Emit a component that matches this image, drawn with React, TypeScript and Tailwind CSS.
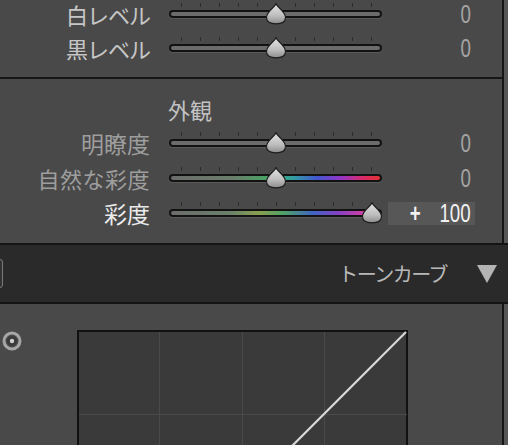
import React from 'react';

// 現像パネル（基本補正の下部 + トーンカーブの上部）
const TICKS = [12, 31, 50, 69, 88, 107, 126, 145, 164, 183, 202];

const GRAY = 'linear-gradient(to right, #6c6c6c, #6c6c6c)';
const VIBRANCE =
  'linear-gradient(to right, #6c6c6c 0%, #6a7e6a 30%, #44a864 48%, #32a0a0 58%, #4256d0 70%, #9a34c4 82%, #dc2a66 92%, #e23232 100%)';
const SATURATION =
  'linear-gradient(to right, #6c6c6c 0%, #6a806a 28%, #8aa050 42%, #4ea266 54%, #4064c4 68%, #8440c4 80%, #d040a4 92%, #e24a84 100%)';

type SliderProps = {
  label: string;
  value: React.ReactNode;
  pos: number;
  track?: string;
  labelClass: string;
  rowClass?: string;
  active?: boolean;
};

function Thumb() {
  return (
    <svg width="22" height="22" viewBox="0 0 22 22">
      <defs>
        <linearGradient id="thumbFill" x1="0" y1="0" x2="0" y2="1">
          <stop offset="0%" stopColor="#e4e4e4" />
          <stop offset="60%" stopColor="#bdbdbd" />
          <stop offset="100%" stopColor="#8c8c8c" />
        </linearGradient>
      </defs>
      <path
        d="M11 0.8 C12.5 4.5 20.5 8.5 20.5 14.5 C20.5 19 17 20.8 11 20.8 C5 20.8 1.5 19 1.5 14.5 C1.5 8.5 9.5 4.5 11 0.8 Z"
        fill="url(#thumbFill)"
        stroke="#1e1e1e"
        strokeWidth="1.2"
      />
    </svg>
  );
}

function Slider({ label, value, pos, track = GRAY, labelClass, rowClass = 'h-[34px]', active }: SliderProps) {
  return (
    <div className={`flex items-center ${rowClass}`}>
      <div className={`w-[150px] text-right leading-none whitespace-nowrap ${labelClass}`}>{label}</div>
      <div className="relative ml-[19px] w-[213px] h-[34px] flex items-center">
        {TICKS.map((t) => (
          <span key={t} className="absolute top-[6px] w-px h-[4px] bg-[#2c2c2c]" style={{ left: t }} />
        ))}
        <div className="w-full h-[8px] rounded-full bg-[#121212] p-[2px] shadow-[0_1px_0_#5a5a5a]">
          <div className="h-full rounded-full" style={{ background: track }} />
        </div>
        <div className="absolute top-[6px]" style={{ left: pos - 11 }}>
          <Thumb />
        </div>
      </div>
      <div
        className={`ml-[6px] w-[87px] h-[23px] flex items-center justify-end pr-[4px] ${
          active ? 'bg-[#575757] text-[#f2f2f2]' : 'text-[#a4a4a4]'
        }`}
      >
        {value}
      </div>
    </div>
  );
}

function Num({ children, className = '' }: { children: React.ReactNode; className?: string }) {
  return (
    <span
      className={`font-['Liberation_Sans',Arial,sans-serif] text-[25px] leading-none scale-x-75 origin-right whitespace-pre ${className}`}
    >
      {children}
    </span>
  );
}

function PanelRow({ children }: { children: React.ReactNode }) {
  return (
    <div className="flex shrink-0">
      <div className="w-[502px] bg-[#494949]">{children}</div>
      <div className="w-[2px] bg-[#161616]" />
      <div className="flex-1 bg-[#565656]" />
    </div>
  );
}

export default function App() {
  return (
    <div className="w-[508px] h-[445px] overflow-hidden bg-[#494949] flex flex-col font-['Noto_Sans_CJK_JP','Noto_Sans',sans-serif]">
      <PanelRow>
        <div className="h-[77px] flex flex-col">
          <Slider
            label="白レベル"
            value={<Num>0</Num>}
            pos={107}
            rowClass="h-[28px] overflow-visible"
            labelClass="text-[22px] text-[#c6c6c6] tracking-[-1px]"
          />
          <div className="mt-[3px]">
            <Slider
              label="黒レベル"
              value={<Num>0</Num>}
              pos={107}
              labelClass="text-[22px] text-[#c6c6c6] tracking-[-1px]"
            />
          </div>
        </div>
        <div className="h-[2px] bg-[#161616]" />
        <div className="h-[164px] pt-[12px]">
          <div className="h-[35px] flex items-center">
            <div className="w-[380px] text-center text-[22px] leading-none text-[#c2c2c2]">外観</div>
          </div>
          <div className="flex flex-col gap-[1px]">
            <Slider
              label="明瞭度"
              value={<Num>0</Num>}
              pos={107}
              labelClass="text-[23px] text-[#9e9e9e]"
            />
            <Slider
              label="自然な彩度"
              value={<Num>0</Num>}
              pos={107}
              track={VIBRANCE}
              labelClass="text-[22px] text-[#9e9e9e] tracking-[0.5px]"
            />
            <Slider
              label="彩度"
              value={
                <div className="flex items-center gap-[9px]">
                  <Num className="font-bold">+</Num>
                  <Num>100</Num>
                </div>
              }
              pos={203}
              track={SATURATION}
              labelClass="text-[23px] text-[#ececec]"
              active
            />
          </div>
        </div>
      </PanelRow>

      <div className="h-[61px] shrink-0 bg-[#2a2a2a] border-y-2 border-[#141414] flex items-center">
        <div className="-ml-[10px] w-[13px] h-[29px] rounded-[3px] border border-[#7a7a7a] bg-[#333]" />
        <div className="ml-auto text-[20px] leading-none tracking-[-1.5px] text-[#b8b8b8]">トーンカーブ</div>
        <svg width="20" height="18" viewBox="0 0 20 18" className="ml-[30px] mr-[11px]">
          <path d="M0 0 H20 L10 18 Z" fill="#b4b4b4" />
        </svg>
      </div>

      <PanelRow>
        <div className="h-[200px] flex items-start">
          <svg width="20" height="20" viewBox="0 0 20 20" className="ml-[2px] mt-[27px]">
            <circle cx="10" cy="10" r="8" fill="none" stroke="#a6a6a6" strokeWidth="3" />
            <circle cx="10" cy="10" r="5" fill="#3a3a3a" />
            <circle cx="10" cy="10" r="2.2" fill="#cfcfcf" />
          </svg>
          <svg width="331" height="331" viewBox="0 0 331 331" className="ml-[55px] mt-[26px]">
            <rect x="1" y="1" width="329" height="329" fill="#3a3a3a" stroke="#111" strokeWidth="2" />
            <line x1="82.5" y1="2" x2="82.5" y2="330" stroke="#4a4a4a" strokeWidth="1" />
            <line x1="165.5" y1="2" x2="165.5" y2="330" stroke="#4a4a4a" strokeWidth="1" />
            <line x1="247.5" y1="2" x2="247.5" y2="330" stroke="#4a4a4a" strokeWidth="1" />
            <line x1="2" y1="84.5" x2="330" y2="84.5" stroke="#4a4a4a" strokeWidth="1" />
            <line x1="2" y1="167.5" x2="330" y2="167.5" stroke="#4a4a4a" strokeWidth="1" />
            <line x1="2" y1="249.5" x2="330" y2="249.5" stroke="#4a4a4a" strokeWidth="1" />
            <line x1="2" y1="329" x2="329" y2="2" stroke="#d6d6d6" strokeWidth="2.2" />
          </svg>
        </div>
      </PanelRow>
    </div>
  );
}
